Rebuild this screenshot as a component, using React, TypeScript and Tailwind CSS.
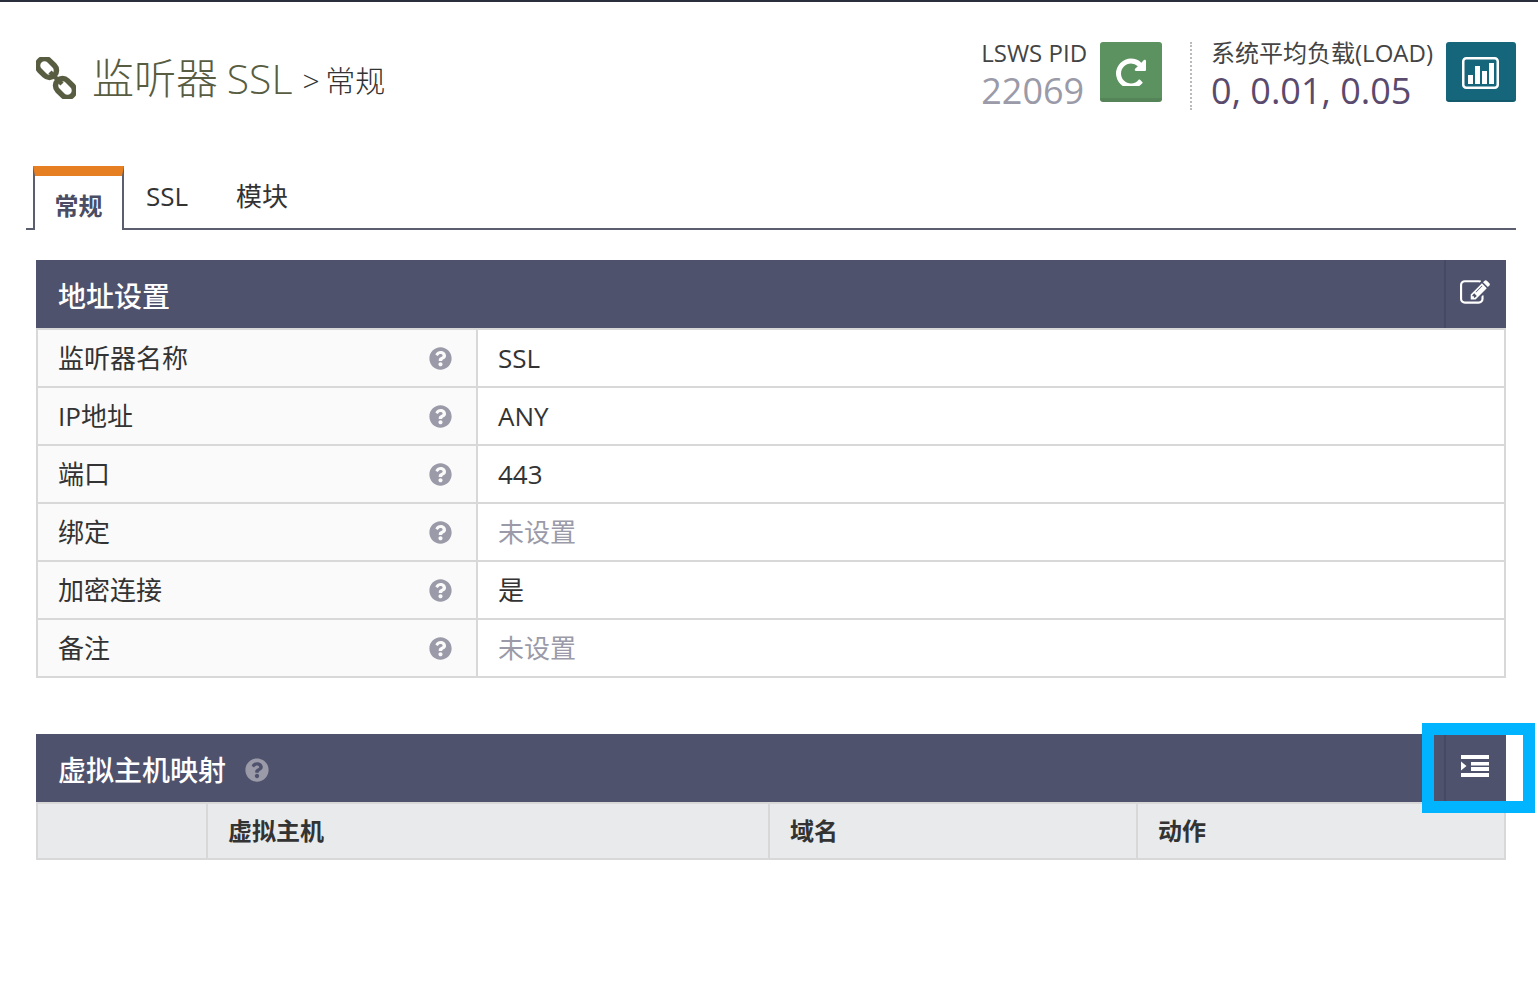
import React from 'react';
import { FaQuestionCircle } from 'react-icons/fa';

const rows = [
  { label: '监听器名称', value: 'SSL' },
  { label: 'IP地址', value: 'ANY' },
  { label: '端口', value: '443' },
  { label: '绑定', value: '未设置', muted: true },
  { label: '加密连接', value: '是' },
  { label: '备注', value: '未设置', muted: true },
];

const font = "font-['Open_Sans','Noto_Sans_CJK_SC',sans-serif]";

function ChainIcon() {
  return (
    <svg viewBox="0 0 40 42" className="h-[42px] w-[40px] text-[#585d42]" fill="none" stroke="currentColor" strokeWidth="5.5">
      <rect x="0.5" y="4" width="21" height="14" rx="7" transform="rotate(45 11 11)" />
      <rect x="18.5" y="24" width="21" height="14" rx="7" transform="rotate(45 29 31)" />
      <path d="M14 15 L26 27" strokeWidth="4.5" />
    </svg>
  );
}

function RepeatIcon() {
  return (
    <svg viewBox="0 0 1536 1536" className="mt-[2px] h-[30px] w-[30px]" fill="currentColor">
      <path d="M1536 256v448q0 26-19 45t-45 19h-448q-42 0-59-40-17-39 14-69l138-138q-148-137-349-137-104 0-198.5 40.5t-163.5 109.5-109.5 163.5-40.5 198.5 40.5 198.5 109.5 163.5 163.5 109.5 198.5 40.5q119 0 225-52t179-147q7-10 23-12 15 0 25 9l137 138q9 8 9.5 20.5t-7.5 22.5q-109 132-264 204.5t-327 72.5q-156 0-298-61t-245-164-164-245-61-298 61-298 164-245 245-164 298-61q147 0 284.5 55.5t244.5 156.5l130-129q29-31 70-14 39 17 39 59z" />
    </svg>
  );
}

function ChartBoxIcon() {
  return (
    <svg viewBox="0 0 37 32" className="mr-[1px] mt-[4px] h-[32px] w-[37px]" fill="currentColor">
      <rect x="1.25" y="1.25" width="34.5" height="29.5" rx="3" fill="none" stroke="currentColor" strokeWidth="2.5" />
      <rect x="6" y="18" width="5" height="9" />
      <rect x="13" y="9" width="5" height="18" />
      <rect x="20" y="14" width="5" height="13" />
      <rect x="27" y="6" width="5" height="21" />
    </svg>
  );
}

function EditIcon() {
  return (
    <svg viewBox="0 0 1792 1792" className="mr-[2px] mt-[2px] h-[30px] w-[30px]" fill="currentColor">
      <path d="M888 1184l116-116-152-152-116 116v56h96v96h56zm440-720q-16-16-33 1l-350 350q-17 17-1 33t33-1l350-350q17-17 1-33zm80 594v190q0 119-84.5 203.5t-203.5 84.5h-832q-119 0-203.5-84.5t-84.5-203.5v-832q0-119 84.5-203.5t203.5-84.5h832q63 0 117 25 15 7 18 23 3 17-9 29l-49 49q-14 14-32 8-23-6-45-6h-832q-66 0-113 47t-47 113v832q0 66 47 113t113 47h832q66 0 113-47t47-113v-126q0-13 9-22l64-64q15-15 35-7t20 29zm-96-738l288 288-672 672h-288v-288zm444 132l-92 92-288-288 92-92q27-27 68-27t68 27l152 152q27 27 27 68t-27 68z" />
    </svg>
  );
}

function IndentIcon() {
  return (
    <svg viewBox="0 0 28 22" className="mr-[2px] h-[22px] w-[28px]" fill="currentColor">
      <rect x="0" y="0" width="28" height="4" />
      <rect x="10" y="7" width="18" height="3.5" />
      <rect x="10" y="12" width="18" height="4" />
      <rect x="0" y="18" width="28" height="4" />
      <path d="M0 6.5 L5.5 11 L0 15.5 Z" />
    </svg>
  );
}

function PanelHeader({ title, help, icon }: { title: string; help?: boolean; icon: React.ReactNode }) {
  return (
    <div className="flex h-[68px] items-stretch bg-[#4f526d] text-white">
      <div className="flex flex-1 items-center gap-[19px] pl-[22px] pt-[4px] text-[28px] font-medium">
        {title}
        {help && <FaQuestionCircle className="text-[24px] text-[#9a9aa8]" />}
      </div>
      <div className="flex w-[62px] items-center justify-center border-l-2 border-[#464962] pb-[4px]">{icon}</div>
    </div>
  );
}

export default function App() {
  return (
    <div className={`relative min-h-[982px] bg-white ${font} text-[#333]`}>
      <div className="h-[2px] bg-[#2b2e3d]" />

      <div className="flex items-start justify-between pl-[36px] pr-[22px] pt-[38px]">
        <div className="flex items-center pt-[9px]">
          <ChainIcon />
          <span className="ml-[16px] text-[41px] font-light leading-[52px] text-[#585d42]">
            <span className="mr-[-2px] text-[42px]">监听器</span> SSL
          </span>
          <span className="ml-[10px] mt-[6px] text-[30px] font-light leading-[52px] text-[#333]">
            &gt;<span className="ml-[-2px]"> 常规</span>
          </span>
        </div>
        <div className="flex items-start pt-[2px]">
          <div className="-mt-[2px] leading-none">
            <div className="text-[24px] leading-[26px] text-[#444]">LSWS PID</div>
            <div className="mt-[4px] text-[36px] leading-[42px] text-[#9a9aa8]">22069</div>
          </div>
          <div className="ml-[13px] flex h-[60px] w-[62px] items-center justify-center rounded-[3px] border-b-[4px] border-[#568459] bg-[#5c9160] text-white">
            <RepeatIcon />
          </div>
          <div className="ml-[28px] mr-[19px] h-[68px] border-l-2 border-dotted border-[#bbbbbb]" />
          <div className="-mt-[2px] leading-none">
            <div className="text-[24px] leading-[26px] text-[#444]">系统平均负载(LOAD)</div>
            <div className="mt-[4px] text-[36px] leading-[42px] text-[#5a4a6e]">0, 0.01, 0.05</div>
          </div>
          <div className="ml-[13px] flex h-[60px] w-[70px] items-center justify-center rounded-[3px] border-b-[2px] border-[#125a6c] bg-[#15667a] text-white">
            <ChartBoxIcon />
          </div>
        </div>
      </div>

      <div className="ml-[26px] mr-[22px] mt-[54px] flex h-[64px] items-stretch border-b-2 border-[#5a5e6e] pl-[7px]">
        <div className="relative -mb-[2px] flex w-[91px] justify-center border-x-2 border-[#5a5e6e] border-t-[10px] border-t-[#e67e22] bg-white pt-[12px] text-[24px] font-bold leading-[36px] text-[#4a4d63]">
          常规
        </div>
        <div className="ml-[22px] pt-[12px] text-[26px] leading-[36px]">SSL</div>
        <div className="ml-[48px] pt-[12px] text-[26px] leading-[36px]">模块</div>
      </div>

      <div className="ml-[36px] mr-[32px] mt-[30px]">
        <PanelHeader title="地址设置" icon={<EditIcon />} />
        <div className="border-x-2 border-b-2 border-[#d8d8d8]">
          {rows.map((r) => (
            <div key={r.label} className="flex h-[58px] border-t-2 border-[#d8d8d8] text-[26px] leading-[36px]">
              <div className="flex w-[440px] items-center justify-between border-r-2 border-[#d8d8d8] bg-[#fafafa] pl-[20px] pr-[24px]">
                <span>{r.label}</span>
                <FaQuestionCircle className="text-[23px] text-[#9a9aa8]" />
              </div>
              <div className={`flex flex-1 items-center pl-[20px] ${r.muted ? 'text-[#9a9aa8]' : ''}`}>{r.value}</div>
            </div>
          ))}
        </div>

        <div className="mt-[56px]">
          <PanelHeader title="虚拟主机映射" help icon={<IndentIcon />} />
          <div className="flex h-[58px] border-x-2 border-y-2 border-[#d8d8d8] bg-[#e9eaec] text-[24px] font-bold">
            <div className="w-[170px] border-r-2 border-[#d8d8d8]" />
            <div className="flex w-[562px] items-center border-r-2 border-[#d8d8d8] pl-[20px]">虚拟主机</div>
            <div className="flex w-[368px] items-center border-r-2 border-[#d8d8d8] pl-[20px]">域名</div>
            <div className="flex flex-1 items-center pl-[20px]">动作</div>
          </div>
        </div>
      </div>

      {/* annotation box from the screenshot */}
      <div className="absolute left-[1422px] top-[723px] h-[90px] w-[113px] border-[12px] border-[#00b4ff]" />
    </div>
  );
}
